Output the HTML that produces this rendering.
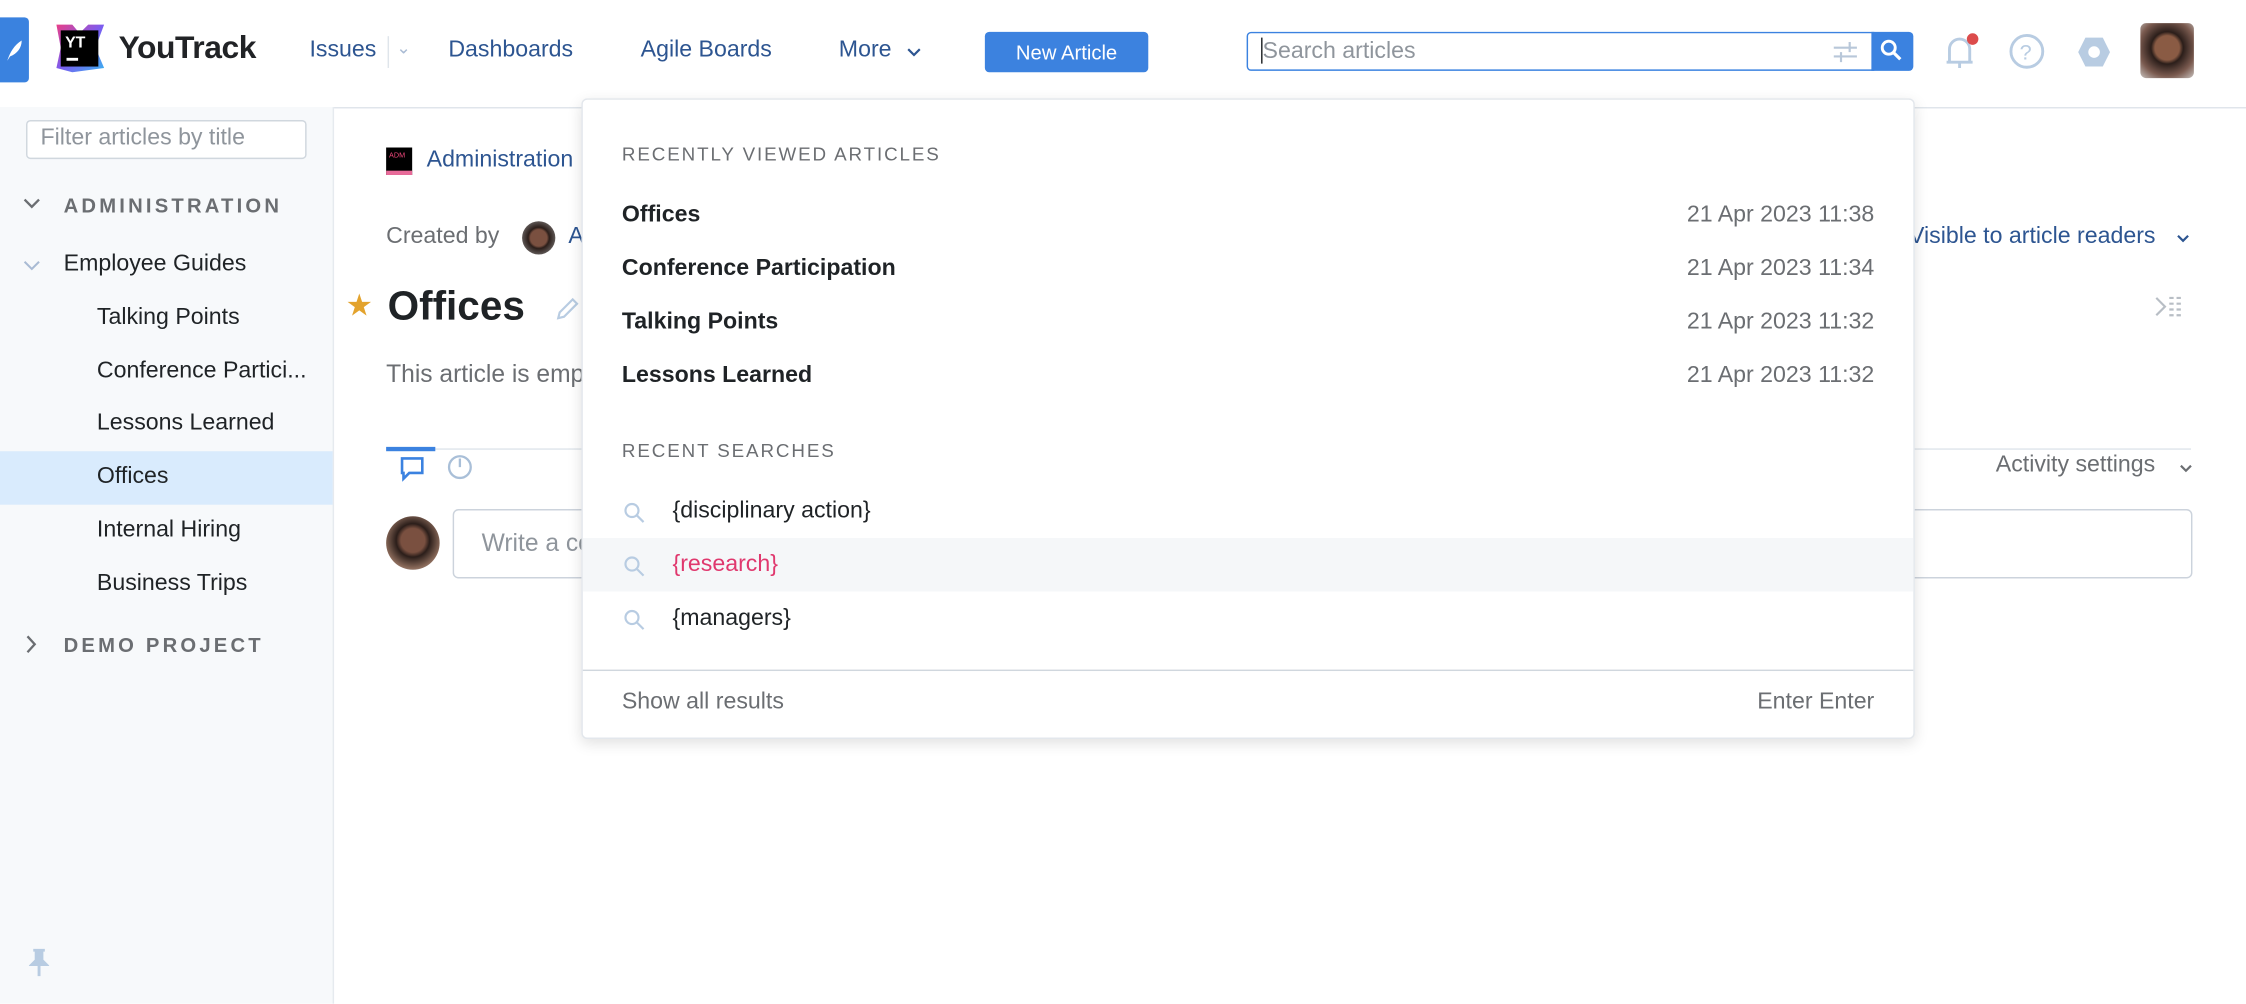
<!DOCTYPE html>
<html><head><meta charset="utf-8"><style>
html,body{margin:0;padding:0;width:2246px;height:989px;overflow:hidden;background:#fff}
#w{position:absolute;left:0;top:0;width:1553px;height:684px;transform:scale(1.4462);transform-origin:0 0;font-family:"Liberation Sans",sans-serif;color:#1f2326}
.a{position:absolute;white-space:nowrap}
.nav{font-size:16px;color:#2d5591;top:26px}
.side{position:absolute;left:0;top:74px;width:230px;height:620px;background:#f7f9fb;border-right:1px solid #e6eaef}
.si{position:absolute;left:67px;font-size:16px;color:#1f2326}
.cap{font-size:14px;font-weight:bold;letter-spacing:2.2px;color:#6b6e72}
.pop{position:absolute;left:402px;top:68px;width:920px;height:441px;background:#fff;border:1px solid #e3e7ec;border-radius:4px;box-shadow:0 3px 10px rgba(0,0,0,.12)}
.h{font-size:13px;letter-spacing:1.3px;color:#6b6e72}
.r{font-size:16px;font-weight:bold;color:#1f2326}
.d{font-size:16px;color:#6b6e72;right:27px}
.s{font-size:16px;color:#1f2326;left:62px}
</style></head><body><div id="w">
<div class="a" style="left:0;top:12px;width:20px;height:45px;background:#3a82df;border-radius:0 3px 3px 0"></div>
<svg class="a" style="left:3px;top:26px" width="14" height="18" viewBox="0 0 14 18"><path d="M2 16 C4 10 7 5 12 2 C12 7 9 11 4 13 Z" fill="#fff"/></svg>
<svg class="a" style="left:36px;top:14px" width="38" height="38" viewBox="0 0 38 38"><defs><linearGradient id="g" x1="0" y1="0" x2="1" y2="1"><stop offset="0" stop-color="#e93e87"/><stop offset=".5" stop-color="#7b5cf0"/><stop offset="1" stop-color="#3ab2f0"/></linearGradient></defs><path d="M3 3 L14 3 L19 9 L25 3 L36 3 L30 19 L36 33 L14 36 L3 33 L6 19 Z" fill="url(#g)"/><rect x="6" y="7" width="26" height="25" fill="#000"/><text x="9" y="19" font-family="Liberation Sans" font-weight="bold" font-size="11" fill="#fff">YT</text><rect x="10" y="26" width="8" height="2" fill="#fff"/></svg>
<div class="a" style="left:82px;top:20px;font-size:22px;font-weight:bold;color:#212326;letter-spacing:-.3px">YouTrack</div>
<div class="a nav" style="left:214px">Issues</div>
<div class="a" style="left:268px;top:25px;width:1px;height:22px;background:#dfe5eb"></div>
<div class="a" style="left:274px;top:26px;font-size:12px;color:#a9bbd4">⌄</div>
<div class="a nav" style="left:310px">Dashboards</div>
<div class="a nav" style="left:443px">Agile Boards</div>
<div class="a nav" style="left:580px">More</div>
<svg class="a" style="left:627px;top:33px" width="10" height="7"><path d="M1 1 L5 5 L9 1" stroke="#2d5591" stroke-width="1.5" fill="none"/></svg>
<div class="a" style="left:681px;top:22px;width:113px;height:28px;background:#3c82df;border-radius:3px;color:#fff;font-size:14px;text-align:center;line-height:28px">New Article</div>
<div class="a" style="left:862px;top:22px;width:432px;height:25px;border:1px solid #3b82e0;border-radius:3px 0 0 3px"></div>
<div class="a" style="left:872px;top:26px;width:1px;height:18px;background:#1f2326"></div>
<div class="a" style="left:873px;top:27px;font-size:16px;color:#8f959c">Search articles</div>
<svg class="a" style="left:1267px;top:28px" width="18" height="16"><path d="M1 5 H17 M1 11 H17 M12 1 V8 M6 8 V15" stroke="#b8c7d9" stroke-width="1.5" fill="none"/></svg>
<div class="a" style="left:1294px;top:22px;width:29px;height:27px;background:#3b82e0;border-radius:0 3px 3px 0"></div>
<svg class="a" style="left:1299px;top:26px" width="18" height="18"><circle cx="7" cy="7" r="4.5" stroke="#fff" stroke-width="2" fill="none"/><path d="M10 10 L15 15" stroke="#fff" stroke-width="2.2"/></svg>
<svg class="a" style="left:1343px;top:22px" width="26" height="28"><path d="M5 21 V12 A7 7 0 0 1 19 12 V21 Z M3 21 H21 M12 21 V25" stroke="#b8cce2" stroke-width="2" fill="none"/><circle cx="21" cy="5" r="4" fill="#dc4b4b"/></svg>
<svg class="a" style="left:1389px;top:23px" width="25" height="25"><circle cx="12.5" cy="12.5" r="11" stroke="#b8cce2" stroke-width="2" fill="none"/><text x="7.5" y="18" font-size="15" fill="#b8cce2" font-family="Liberation Sans">?</text></svg>
<svg class="a" style="left:1436px;top:24px" width="24" height="24"><path d="M6 2 H18 L23 12 L18 22 H6 L1 12 Z" fill="#b8cce2"/><circle cx="12" cy="12" r="4" fill="#fff"/></svg>
<div class="a" style="left:1480px;top:16px;width:37px;height:38px;border-radius:4px;background:radial-gradient(circle at 50% 45%,#8a5b44 0 30%,#2b1e1a 40%,#7a5a4f 70%,#c9c3bf)"></div>
<div class="a" style="left:230px;top:74px;width:1323px;height:1px;background:#dfe5eb"></div>
<div class="side"></div>
<div class="a" style="left:18px;top:83px;width:192px;height:25px;border:1px solid #d0d7de;border-radius:3px;background:#fff"></div>
<div class="a" style="left:28px;top:87px;font-size:16px;color:#8f959c;width:150px;overflow:hidden">Filter articles by title</div>
<svg class="a" style="left:16px;top:137px" width="12" height="9"><path d="M1 1 L6 6 L11 1" stroke="#6b6e72" stroke-width="1.6" fill="none"/></svg>
<div class="a cap" style="left:44px;top:134px">ADMINISTRATION</div>
<svg class="a" style="left:16px;top:180px" width="12" height="9"><path d="M1 1 L6 6 L11 1" stroke="#a9bbd4" stroke-width="1.4" fill="none"/></svg>
<div class="si" style="left:44px;top:174px">Employee Guides</div>
<div class="si" style="top:211px">Talking Points</div>
<div class="si" style="top:248px">Conference Partici...</div>
<div class="si" style="top:284px">Lessons Learned</div>
<div class="a" style="left:0;top:312px;width:230px;height:37px;background:#d9ebfd"></div>
<div class="si" style="top:321px">Offices</div>
<div class="si" style="top:358px">Internal Hiring</div>
<div class="si" style="top:395px">Business Trips</div>
<svg class="a" style="left:18px;top:439px" width="8" height="13"><path d="M1 1 L6 6.5 L1 12" stroke="#6b6e72" stroke-width="1.6" fill="none"/></svg>
<div class="a cap" style="left:44px;top:438px">DEMO PROJECT</div>
<svg class="a" style="left:20px;top:656px" width="14" height="20"><path d="M3 1 H11 M5 1 V8 L2 11 H12 L9 8 V1 M7 11 V19" stroke="#b8cce2" stroke-width="2" fill="#b8cce2"/></svg>
<div class="a" style="left:267px;top:102px;width:18px;height:19px;background:#000;border-bottom:3px solid #e86b9a;box-sizing:border-box;color:#f2497d;font-size:5px;padding:3px 0 0 2px">ADM</div>
<div class="a" style="left:295px;top:102px;font-size:16px;color:#2d5591">Administration</div>
<div class="a" style="left:267px;top:155px;font-size:16px;color:#6b6e72">Created by</div>
<div class="a" style="left:361px;top:153px;width:23px;height:23px;border-radius:50%;background:radial-gradient(circle,#7a5040 0 35%,#2b1e1a 45%,#999)"></div>
<div class="a" style="left:393px;top:155px;font-size:16px;color:#2d5591">A</div>
<div class="a" style="left:1320px;top:155px;font-size:16px;color:#2d5591">Visible to article readers</div>
<svg class="a" style="left:1505px;top:162px" width="9" height="6"><path d="M1 1 L4.5 4.5 L8 1" stroke="#2d5591" stroke-width="1.5" fill="none"/></svg>
<div class="a" style="left:239px;top:199px;font-size:21px;color:#e3a32d">★</div>
<div class="a" style="left:268px;top:196px;font-size:28px;font-weight:bold;color:#1f2326">Offices</div>
<svg class="a" style="left:383px;top:204px" width="18" height="18"><path d="M3 16 L4 12 L13 3 L16 6 L7 15 Z" stroke="#b8cce2" stroke-width="1.5" fill="none"/></svg>
<svg class="a" style="left:1490px;top:204px" width="20" height="16"><path d="M1 2 L7 8 L1 14" stroke="#b8bec5" stroke-width="1.5" fill="none"/><path d="M10 2 H18 M10 6 H18 M10 10 H18 M10 14 H18" stroke="#b8bec5" stroke-width="1.5" stroke-dasharray="3 2"/></svg>
<div class="a" style="left:267px;top:249px;font-size:17px;color:#6b6e72">This article is empty</div>
<div class="a" style="left:267px;top:310px;width:1248px;height:1px;background:#dfe5eb"></div>
<div class="a" style="left:267px;top:309px;width:34px;height:3px;background:#3b82e0"></div>
<svg class="a" style="left:276px;top:315px" width="18" height="18"><path d="M2 2 H16 V12 H7 L3 16 V12 H2 Z" stroke="#3b82e0" stroke-width="1.8" fill="none"/></svg>
<svg class="a" style="left:309px;top:313px" width="18" height="19"><circle cx="9" cy="10" r="7.5" stroke="#a9bfd8" stroke-width="1.6" fill="none"/><path d="M9 10 V4" stroke="#a9bfd8" stroke-width="1.6"/></svg>
<div class="a" style="left:1380px;top:313px;font-size:16px;color:#6b6e72">Activity settings</div>
<svg class="a" style="left:1507px;top:321px" width="9" height="6"><path d="M1 1 L4.5 4.5 L8 1" stroke="#6b6e72" stroke-width="1.5" fill="none"/></svg>
<div class="a" style="left:267px;top:357px;width:37px;height:37px;border-radius:50%;background:radial-gradient(circle at 50% 45%,#7a5040 0 30%,#2b1e1a 42%,#8a6a5a 70%,#ccc)"></div>
<div class="a" style="left:313px;top:352px;width:1201px;height:46px;border:1px solid #ccd3dc;border-radius:4px"></div>
<div class="a" style="left:333px;top:366px;font-size:17px;color:#8f959c">Write a comment</div>
<div class="pop">
<div class="a h" style="left:27px;top:30px">RECENTLY VIEWED ARTICLES</div>
<div class="a r" style="left:27px;top:71px">Offices</div><div class="a d" style="top:71px">21 Apr 2023 11:38</div>
<div class="a r" style="left:27px;top:108px">Conference Participation</div><div class="a d" style="top:108px">21 Apr 2023 11:34</div>
<div class="a r" style="left:27px;top:145px">Talking Points</div><div class="a d" style="top:145px">21 Apr 2023 11:32</div>
<div class="a r" style="left:27px;top:182px">Lessons Learned</div><div class="a d" style="top:182px">21 Apr 2023 11:32</div>
<div class="a h" style="left:27px;top:235px">RECENT SEARCHES</div>
<div class="a" style="left:0;top:303px;width:920px;height:37px;background:#f5f7f9"></div>
<svg class="a" style="left:28px;top:278px" width="16" height="16"><circle cx="6" cy="6" r="4.5" stroke="#b8cce2" stroke-width="1.5" fill="none"/><path d="M9.5 9.5 L14 14" stroke="#b8cce2" stroke-width="1.5"/></svg>
<div class="a s" style="top:276px">{disciplinary action}</div>
<svg class="a" style="left:28px;top:315px" width="16" height="16"><circle cx="6" cy="6" r="4.5" stroke="#b8cce2" stroke-width="1.5" fill="none"/><path d="M9.5 9.5 L14 14" stroke="#b8cce2" stroke-width="1.5"/></svg>
<div class="a s" style="top:313px;color:#e0386e">{research}</div>
<svg class="a" style="left:28px;top:352px" width="16" height="16"><circle cx="6" cy="6" r="4.5" stroke="#b8cce2" stroke-width="1.5" fill="none"/><path d="M9.5 9.5 L14 14" stroke="#b8cce2" stroke-width="1.5"/></svg>
<div class="a s" style="top:350px">{managers}</div>
<div class="a" style="left:0;top:394px;width:920px;height:1px;background:#d0d7de"></div>
<div class="a" style="left:27px;top:408px;font-size:16px;color:#6b6e72">Show all results</div>
<div class="a d" style="top:408px">Enter Enter</div>
</div>
</div></body></html>
